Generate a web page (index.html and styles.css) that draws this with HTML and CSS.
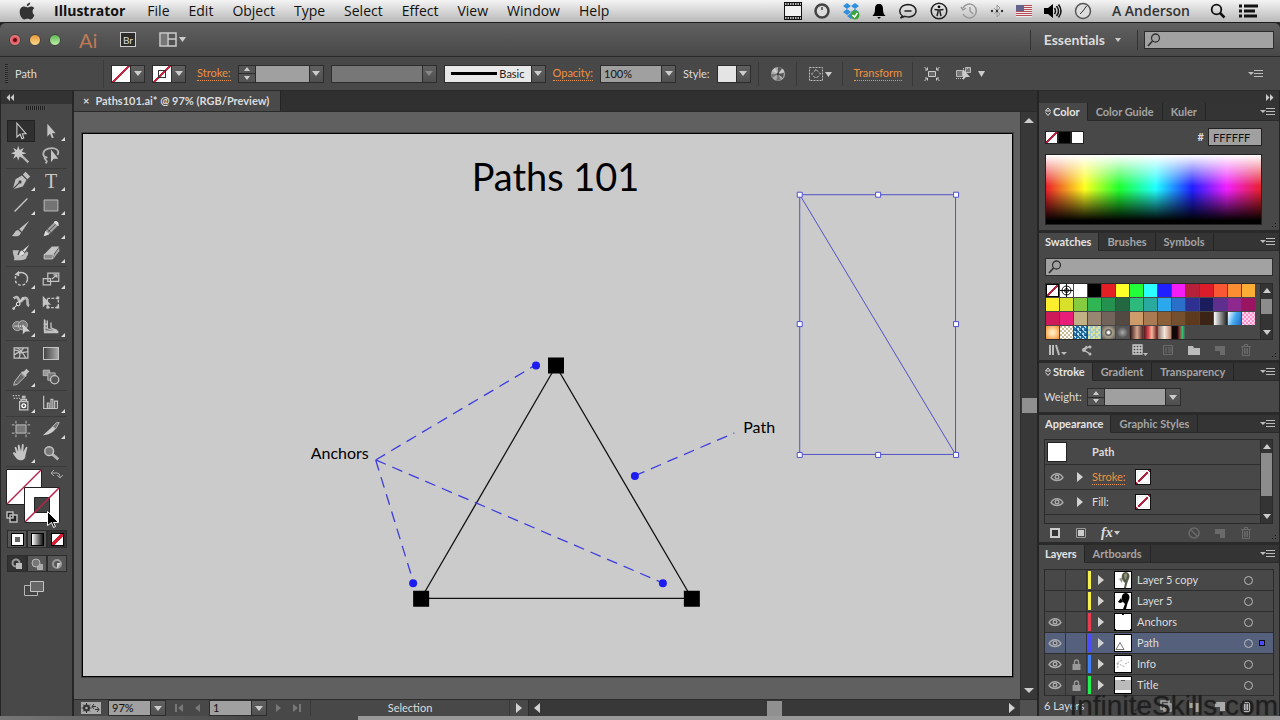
FILE: index.html
```html
<!DOCTYPE html>
<html lang="en">
<head>
    <meta charset="UTF-8">
    <meta name="viewport" content="width=device-width, initial-scale=1.0">
    <title>Illustrator - Paths101.ai</title>
    <link rel="stylesheet" href="styles.css">
</head>
<body>
    <!-- System menu bar -->
    <header class="menubar">
        <svg class="apple" width="18" height="18" viewBox="0 0 18 18"><path d="M12.2 0.6c0.2 1.8-1.6 3.7-3.4 3.6C8.600 2.500 10.300 0.800 12.200 0.600zM14.600 9.400c0-1.700 0.900-2.600 1.700-3.100-1-1.400-2.400-1.700-3.300-1.700-1.500 0-2.500 0.800-3.300 0.800S7.500 4.600 6.200 4.600C4 4.600 1.700 6.300 1.700 9.900c0 3.600 2.500 7.500 4.600 7.500 1.100 0 1.800-0.700 3.200-0.700 1.300 0 1.900 0.700 3.100 0.700 1.700 0 3.200-2.500 3.800-4.400-1.200-0.500-1.800-1.900-1.800-3.600z"/></svg>
        <nav class="menus">
            <a href="#" class="app-name">Illustrator</a>
            <a href="#">File</a>
            <a href="#">Edit</a>
            <a href="#">Object</a>
            <a href="#">Type</a>
            <a href="#">Select</a>
            <a href="#">Effect</a>
            <a href="#">View</a>
            <a href="#">Window</a>
            <a href="#">Help</a>
        </nav>
        <div class="menu-extras">
            <svg width="18" height="18" viewBox="0 0 18 18"><path fill="#111" d="M0 0h18v18H0z"/><path fill="#f2f2f2" d="M1 4h16v10H1z"/><path stroke="#eee" stroke-width="1.500" stroke-dasharray="1.500 1" d="M1 2h16M1 16h16"/></svg>
            <svg width="16" height="16" viewBox="0 0 16 16"><circle cx="8" cy="8" r="6.500" fill="#ddd" stroke="#444" stroke-width="2.500"/><path stroke="#444" stroke-width="1.500" d="M8 4v3"/></svg>
            <svg width="18" height="18" viewBox="0 0 18 18"><path fill="#2f8fe0" d="M5 1l4 3-4 3-4-3zM13 1l4 3-4 3-4-3zM5 7l4 3-4 3-4-3zM13 7l4 3-4 3-4-3zM5 14l4-3 4 3-4 3z"/><circle cx="13" cy="13" r="4.500" fill="#3ea338"/><path fill="none" stroke="#fff" stroke-width="1.500" d="M10.500 13l2 2 3-4"/></svg>
            <svg width="14" height="16" viewBox="0 0 14 16"><path d="M7 1c3 0 4 2 4 5 0 4 1 5 2.500 7H0.500C2 11 3 10 3 6c0-3 1-5 4-5zM5.500 14h3c0 2-3 2-3 0z"/></svg>
            <svg width="20" height="18" viewBox="0 0 20 18"><path fill="none" stroke="#222" stroke-width="1.500" d="M4.500 14C0 11 1 3 10 2.500c10 0 11 12 1 12.500-2 0-3-0.300-4-0.600L2.500 16zM6.500 9h7"/></svg>
            <svg width="18" height="18" viewBox="0 0 18 18"><circle cx="9" cy="9" r="7.800" fill="none" stroke="#222" stroke-width="1.500"/><circle cx="9" cy="4.800" r="1.400"/><path fill="none" stroke="#222" stroke-width="1.500" d="M4.500 7.500L9 8l4.500-0.500M7 14l1-4V8h2v2l1 4"/></svg>
            <svg width="18" height="18" viewBox="0 0 18 18"><path fill="none" stroke="#999" stroke-width="1.500" d="M3 6a7 7 0 1 1 0 6M1 5l2 3 3-2M10 5v4l3 3"/></svg>
            <svg width="14" height="16" viewBox="0 0 14 16"><path fill="none" stroke="#999" d="M4 5l6 6-3 3V2l3 3-6 6"/><circle cx="2" cy="8" r="1.200" fill="#333"/><circle cx="7" cy="8" r="1.200" fill="#333"/><circle cx="12" cy="8" r="1.200" fill="#333"/></svg>
            <svg width="16" height="12" viewBox="0 0 16 12"><path fill="#eee" d="M0 0h16v12H0z"/><path stroke="#b64a55" d="M0 0.500h16M0 2.500h16M0 4.500h16M0 6.500h16M0 8.500h16M0 10.500h16"/><path fill="#63638c" d="M0 0h8v6H0z"/></svg>
            <svg width="18" height="16" viewBox="0 0 18 16"><path d="M0 5h4l5-4v14l-5-4H0z"/><path fill="none" stroke="#111" stroke-width="1.500" d="M10.500 5q2 3 0 6M12.500 3q4 5 0 10M14.500 1.500q5 6.500 0 13"/></svg>
            <svg width="18" height="18" viewBox="0 0 18 18"><circle cx="9" cy="9" r="7.500" fill="#ddd" stroke="#555" stroke-width="1.500"/><path fill="none" stroke="#333" d="M12.500 4L9 9l-3 3"/></svg>
            <span class="user-name">A Anderson</span>
            <svg width="16" height="16" viewBox="0 0 16 16"><circle cx="6.500" cy="6.500" r="4.800" fill="none" stroke="#111" stroke-width="1.800"/><path stroke="#111" stroke-width="2.500" d="M10 10l4.500 4.500"/></svg>
            <svg width="22" height="14" viewBox="0 0 22 14"><path stroke="#111" stroke-width="3" d="M1 2h3M6 2h14M1 7h3M6 7h11M1 12h3M6 12h13"/></svg>
        </div>
    </header>

    <!-- Application bar -->
    <div class="appbar">
        <div class="lights">
            <button class="light red" aria-label="Close"></button>
            <button class="light amber" aria-label="Minimize"></button>
            <button class="light green" aria-label="Zoom"></button>
        </div>
        <span class="logo">Ai</span>
        <button class="bridge">Br</button>
        <button class="arrange" aria-label="Arrange documents">
            <svg width="27" height="16" viewBox="0 0 27 16"><path fill="none" stroke="#ccc" stroke-width="1.500" d="M1 1h16v13H1zM9 1v13M9 7h8"/><path fill="#777" d="M2 2h6v11H2z"/><path fill="#ccc" d="M20 5h7l-3.500 5z"/></svg>
        </button>
        <div class="appbar-right">
            <button class="workspace">Essentials <span class="caret small"></span></button>
            <label class="search top-search">
                <svg width="14" height="14" viewBox="0 0 14 14"><use href="#i-lens"/></svg>
                <input type="text" aria-label="Search help">
            </label>
        </div>
    </div>

    <!-- Control bar -->
    <div class="controlbar">
        <span class="grip"></span>
        <span class="object-type">Path</span>
        <span class="combo"><button class="chip none" aria-label="Fill"></button><button class="drop" aria-label="Fill options"><i class="caret"></i></button></span>
        <span class="combo"><button class="chip none ring" aria-label="Stroke"></button><button class="drop" aria-label="Stroke options"><i class="caret"></i></button></span>
        <a href="#" class="hot push">Stroke:</a>
        <span class="combo">
            <span class="stepper"><button aria-label="Increase"><i class="caret up"></i></button><button aria-label="Decrease"><i class="caret"></i></button></span>
            <input class="weight" type="text" aria-label="Stroke weight">
            <button class="drop" aria-label="Weights"><i class="caret"></i></button>
        </span>
        <span class="combo disabled"><button class="profile" aria-label="Width profile" disabled></button><button class="drop" aria-label="Profiles" disabled><i class="caret"></i></button></span>
        <span class="combo"><button class="brush"><i class="line"></i>Basic</button><button class="drop" aria-label="Brushes"><i class="caret"></i></button></span>
        <a href="#" class="hot">Opacity:</a>
        <span class="combo"><input class="opacity" type="text" value="100%" aria-label="Opacity"><button class="drop" aria-label="Opacities"><i class="caret"></i></button></span>
        <span class="label">Style:</span>
        <span class="combo"><button class="chip plain" aria-label="Style"></button><button class="drop" aria-label="Styles"><i class="caret"></i></button></span>
        <span class="tool-group">
            <svg width="16" height="16" viewBox="0 0 16 16"><circle cx="8" cy="8" r="7" fill="#aaa"/><path fill="#555" d="M8 8V1l4 1zM8 8l6-1-1 5z"/><path fill="#777" d="M8 8l3 6-5 1zM8 8l-6 4-1-4z"/><path fill="#ccc" d="M8 8L2 5l3-3zM8 8l5-5 1 3z"/><circle cx="8" cy="8" r="1.500" fill="#444"/></svg>
        </span>
        <span class="tool-group">
            <svg width="24" height="16" viewBox="0 0 24 16"><path fill="none" stroke="#bbb" stroke-dasharray="2 1" d="M1.500 1.500h13v13h-13z"/><path fill="none" stroke="#ccc" stroke-dasharray="3 1.500" d="M8 3.500l4.500 4.500L8 12.500 3.500 8z"/><path fill="#ccc" d="M17 6h7l-3.500 5z"/></svg>
        </span>
        <span class="tool-group"><a href="#" class="hot">Transform</a></span>
        <span class="tool-group wide">
            <svg width="16" height="16" viewBox="0 0 16 16"><path fill="#666" stroke="#ccc" d="M4.500 5.500h7v5h-7z"/><path fill="none" stroke="#ccc" d="M0.500 1l3 3M3.500 1.500V4H1M15.500 1l-3 3M12.500 1.500V4H15M0.500 15l3-3M3.500 14.500V12H1M15.500 15l-3-3M12.500 14.500V12H15"/></svg>
            <svg width="30" height="16" viewBox="0 0 30 16"><path fill="#777" stroke="#bbb" d="M1.500 4.500h6v6h-6zM10.500 1.500h5v5h-5z"/><path stroke="#bbb" stroke-dasharray="1 1" d="M1 12.500h8M8 2.500h5"/><path fill="#ccc" d="M8 3v11l3-3h4zM23 5h7l-3.500 6z"/></svg>
        </span>
        <button class="flyout" aria-label="Control menu"><svg width="16" height="10"><use href="#i-menu"/></svg></button>
    </div>

    <main class="workspace-area">
        <!-- Tools panel -->
        <aside class="tools">
            <div class="dock-head"><svg width="8" height="7" viewBox="0 0 8 7"><path fill="#ccc" d="M4 0v7L0.500 3.500zM8 0v7L4.500 3.500z"/></svg></div>
            <div class="tools-grip"></div>
            <div class="tool-set">
                <button class="tool active" aria-label="Selection"><svg viewBox="0 0 24 24"><path fill="#333" stroke="#ccc" stroke-width="1.200" d="M7.500 3.500v15l3.500-3 2 5 2-1-1.500-4.500h4z"/></svg></button>
                <button class="tool more" aria-label="Direct selection"><svg viewBox="0 0 24 24"><path fill="#c4c4c4" d="M8 4v14l3-3 2 5 2-1-2-4.500h4z"/></svg></button>
                <button class="tool" aria-label="Magic wand"><svg viewBox="0 0 24 24"><path stroke="#b5b5b5" stroke-width="2.500" d="M12 12l8 8"/><path fill="#c8c8c8" d="M9 2l1.500 4.500L15 4l-2 4.500L18 10l-5 1.500L15 16l-4.500-2.500L9 18l-1.500-4.500L3.500 16l2-4.500L1 10l4.500-1.500L3.500 4l4 2.500z"/></svg></button>
                <button class="tool" aria-label="Lasso"><svg viewBox="0 0 24 24"><path fill="none" stroke="#b5b5b5" stroke-width="2" d="M8 15C2 14 2 7 9 5c8-2 13 2 10 7M8 15c-3-2-4 0-2 2s2 2 0 4"/><path fill="#c4c4c4" d="M12 6v14l3-4h5z"/></svg></button>
            </div>
            <div class="tool-set">
                <button class="tool more" aria-label="Pen"><svg viewBox="0 0 24 24"><path fill="#c0c0c0" d="M3 21l3-11 7-4 5 5-4 7zM14 5l3-3 5 5-3 3z"/><path stroke="#444" stroke-width="1.200" d="M3 21l7-7"/><circle cx="11" cy="13" r="1.700" fill="#444"/></svg></button>
                <button class="tool more type-tool" aria-label="Type">T</button>
                <button class="tool more" aria-label="Line segment"><svg viewBox="0 0 24 24"><path stroke="#c4c4c4" stroke-width="1.500" d="M5 19L19 5"/></svg></button>
                <button class="tool more" aria-label="Rectangle"><svg viewBox="0 0 24 24"><path fill="#747474" stroke="#c4c4c4" d="M4.500 6.500h15v12h-15z"/></svg></button>
                <button class="tool" aria-label="Paintbrush"><svg viewBox="0 0 24 24"><path fill="#c0c0c0" d="M21 3L10 12l3 3zM9 13l3 3c-1 4-6 5-10 3 3-1 3-6 7-6z"/></svg></button>
                <button class="tool more" aria-label="Pencil"><svg viewBox="0 0 24 24"><path fill="#a0a0a0" d="M4 20l3-7L16 4l4 4-9 9z"/><path fill="#ddd" d="M4 20l2-6 4 4zM15 5c2-4 7 0 5 4z"/><path stroke="#555" d="M8 12l5 5M9 15l8-8"/></svg></button>
                <button class="tool" aria-label="Blob brush"><svg viewBox="0 0 24 24"><path fill="#bcbcbc" d="M3 9h7l-2 5 6 1 4-5c3 1 2 5 0 6 1 3-4 4-8 4H4c2-3-1-5-1-11z"/><path fill="#ddd" d="M21 3l-7 6 2 2zM13 9l3 3c-1 3-4 3-6 3 0-2 0-4 3-6z"/></svg></button>
                <button class="tool more" aria-label="Eraser"><svg viewBox="0 0 24 24"><path fill="#c4c4c4" d="M5 13l8-8h8l-6 8z"/><path fill="#8c8c8c" stroke="#ccc" d="M4.500 13.500H15l-1.500 5h-9z"/><path fill="#aaa" d="M16 13l5-7v4l-7 9z"/></svg></button>
            </div>
            <div class="tool-set">
                <button class="tool more" aria-label="Rotate"><svg viewBox="0 0 24 24"><path fill="none" stroke="#c4c4c4" stroke-width="1.600" d="M8 6c6-3 12 1 11 7"/><path fill="none" stroke="#c4c4c4" stroke-width="1.600" stroke-dasharray="3 2" d="M19 13c-2 8-12 7-13 1V8"/><path fill="#c4c4c4" d="M5 7l5-4v6z"/></svg></button>
                <button class="tool more" aria-label="Scale"><svg viewBox="0 0 24 24"><path fill="none" stroke="#c4c4c4" stroke-width="1.300" d="M8.500 5.500h12v9h-12zM3.500 11.500h8v7h-8zM13 12l5-4M14.500 7.500h4v3"/></svg></button>
                <button class="tool more" aria-label="Width"><svg viewBox="0 0 24 24"><path fill="none" stroke="#b5b5b5" stroke-width="3" d="M4 7c6-5 5 5 8 3s3-5 6-3-1 7 3 8"/><path stroke="#ddd" stroke-width="1.200" d="M4 18L14 7"/><circle cx="9" cy="13" r="2" fill="#444" stroke="#fff"/><circle cx="4" cy="18" r="1.500" fill="#ccc"/><circle cx="14" cy="7" r="1.500" fill="#ccc"/></svg></button>
                <button class="tool" aria-label="Free transform"><svg viewBox="0 0 24 24"><path fill="none" stroke="#c4c4c4" stroke-width="1.500" stroke-dasharray="3 1.500" d="M8 7h12v10H8z"/><path fill="#c4c4c4" d="M3 4v13l3-3h6zM18 5h3v3h-3zM18 15h3v3h-3zM7 15h3v3H7z"/></svg></button>
                <button class="tool more" aria-label="Shape builder"><svg viewBox="0 0 24 24"><circle cx="8" cy="11" r="5" fill="#777" stroke="#b5b5b5"/><circle cx="14" cy="10" r="5" fill="#777" stroke="#b5b5b5"/><path stroke="#fff" stroke-width="1.500" stroke-dasharray="1 1" d="M5 11h9"/><path fill="#ccc" d="M14 9v11l3-3h5z"/></svg></button>
                <button class="tool more" aria-label="Perspective grid"><svg viewBox="0 0 24 24"><path fill="#888" d="M4 3l3 2v13H4z"/><path fill="none" stroke="#c4c4c4" stroke-width="1.400" d="M5 4v14h15L5 16M8 5v9l12 3M12 7v6l7 3M4 9h4M4 13h4"/></svg></button>
            </div>
            <div class="tool-set">
                <button class="tool" aria-label="Mesh"><svg viewBox="0 0 24 24"><path fill="none" stroke="#c4c4c4" stroke-width="1.400" d="M4.500 6.500h15v11h-15zM5 9c5-1 7 4 5 8M7 6c6 3 7 6 10 11M15 6c-1 4-5 4-10 8M10 12c4 0 7-2 10-1"/></svg></button>
                <button class="tool" aria-label="Gradient"><i class="gradient-tile"></i></button>
                <button class="tool more" aria-label="Eyedropper"><svg viewBox="0 0 24 24"><path fill="#c4c4c4" d="M13 6l2 0 3-3 3 3-3 3v2l-1 1-5-5z"/><path fill="#666" stroke="#c4c4c4" d="M12 8l4 4-8 8-4 1 1-4z"/></svg></button>
                <button class="tool" aria-label="Blend"><svg viewBox="0 0 24 24"><path fill="#999" stroke="#bbb" d="M3.500 4.500h7v6h-7z"/><path fill="#777" stroke="#bbb" d="M8.500 7.500h8v8h-8z"/><circle cx="16" cy="15" r="4.500" fill="#555" stroke="#c4c4c4" stroke-width="1.400"/></svg></button>
            </div>
            <div class="tool-set">
                <button class="tool more" aria-label="Symbol sprayer"><svg viewBox="0 0 24 24"><path stroke="#c4c4c4" stroke-width="1.500" stroke-dasharray="1.500 1.500" d="M3 4h9M4 7h7"/><path fill="none" stroke="#c4c4c4" stroke-width="1.400" d="M10.500 10.500h9v9h-9zM12 8h6v2h-6z"/><path fill="#bbb" d="M13 4h4v3h-4z"/><circle cx="15" cy="15" r="2" fill="none" stroke="#fff" stroke-width="1.500"/></svg></button>
                <button class="tool more" aria-label="Column graph"><svg viewBox="0 0 24 24"><path fill="none" stroke="#c4c4c4" stroke-width="1.300" d="M4 4v14h15M8 18v-6h2v6M12 18V8h2v10M16 18V10h3v8"/></svg></button>
            </div>
            <div class="tool-set">
                <button class="tool" aria-label="Artboard"><svg viewBox="0 0 24 24"><path fill="#777" stroke="#c4c4c4" d="M6.500 7.500h11v9h-11z"/><path stroke="#c4c4c4" d="M6.500 3v3M17.500 3v3M6.500 18v3M17.500 18v3M2 7.500h3M19 7.500h3M2 16.500h3M19 16.500h3"/></svg></button>
                <button class="tool more" aria-label="Slice"><svg viewBox="0 0 24 24"><path fill="#ccc" d="M3 19L14 9l3 3c-4 5-8 6-14 7z"/><path fill="#777" stroke="#bbb" d="M14 9l4-4h3l-4 7z"/></svg></button>
                <button class="tool more" aria-label="Hand"><svg viewBox="0 0 24 24"><path fill="#c4c4c4" d="M7 13L5 6c0-1 1.500-1 2 0l2 5-0.500-7c0-1.500 2-1.500 2 0L12 10l1-7c0-1 2-1 2 0l-0.500 8L17 6c0.500-1 2-1 2 0l-2 8c0 4-2 6-5 6-4 0-6-3-9-8 1-1.500 3-0.500 4 1z"/></svg></button>
                <button class="tool" aria-label="Zoom"><svg viewBox="0 0 24 24"><path stroke="#b5b5b5" stroke-width="3" d="M13 13l7 6"/><circle cx="10" cy="10" r="4.800" fill="#777" stroke="#c4c4c4" stroke-width="1.600"/></svg></button>
            </div>
            <div class="paint">
                <svg width="60" height="56" viewBox="0 0 60 56">
                    <path fill="#fff" stroke="#222" d="M0.500 0.500h35v35h-35z"/>
                    <path stroke="#b3244b" stroke-width="1.500" d="M1 35L35 1"/>
                    <path fill="#fff" stroke="#222" d="M18.500 18.500h35v35h-35z"/>
                    <path fill="#444" stroke="#222" d="M28.500 28.500h15v15h-15z"/>
                    <path stroke="#b3244b" stroke-width="1.500" d="M19 53L53 19"/>
                    <path fill="none" stroke="#aaa" d="M46 4h5q3 0 3 4M48 1l-3 3 3 3M51 6l3 3 3-3"/>
                    <path fill="#222" stroke="#bbb" stroke-width="1.500" d="M4 46h7v7H4zM1 43h6v6H1z"/>
                    <path stroke="#fff" d="M41.500 42.500v14l4-3 2 5 2-1-2-4h5z"/>
                </svg>
            </div>
            <div class="mode-row">
                <button aria-label="Color"><i class="m-color"></i></button>
                <button aria-label="Gradient"><i class="m-gradient"></i></button>
                <button class="on" aria-label="None"><i class="m-none"></i></button>
            </div>
            <div class="mode-row draw">
                <button class="on" aria-label="Draw normal"><svg width="12" height="12" viewBox="0 0 12 12"><circle cx="5" cy="5" r="3.500" fill="none" stroke="#999" stroke-width="2"/><path fill="#bbb" d="M5 5h6v6H5z"/></svg></button>
                <button aria-label="Draw behind"><svg width="12" height="12" viewBox="0 0 12 12"><path fill="#aaa" d="M6 6h6v6H6z"/><circle cx="5" cy="5" r="4" fill="#777" stroke="#bbb"/></svg></button>
                <button aria-label="Draw inside"><svg width="12" height="12" viewBox="0 0 12 12"><circle cx="6" cy="6" r="4" fill="none" stroke="#999" stroke-width="2"/><path fill="#ccc" d="M6 5h4l-3 5H6z"/></svg></button>
            </div>
            <button class="screen-mode" aria-label="Screen mode"><svg width="22" height="18" viewBox="0 0 22 18"><path fill="#444" stroke="#b5b5b5" d="M1.500 5.500h13v10h-13z"/><path fill="#666" stroke="#c4c4c4" d="M7.500 1.500h13v10h-13z"/></svg></button>
        </aside>

        <!-- Document window -->
        <section class="document">
            <div class="doc-tabs">
                <div class="doc-tab"><button aria-label="Close tab">×</button>Paths101.ai* @ 97% (RGB/Preview)</div>
            </div>
            <div class="doc-view">
                <div class="stage">
                    <div class="artboard">
                        <svg width="100%" height="100%" viewBox="83 134 930 542">
                            <text class="art-title" x="556" y="191" text-anchor="middle">Paths 101</text>
                            <path class="triangle" d="M556.500 366L421.500 598.500H692.500z"/>
                            <path d="M548.500 357.500h16v16h-16zM413.500 591h16v16h-16zM684.500 591h16v16h-16z"/>
                            <path class="pointer" d="M376 460L536 365M376 460l38 123M376 460L663 583M635 476l100-43"/>
                            <g class="dots">
                                <circle cx="536.500" cy="365.500" r="4"/>
                                <circle cx="413.500" cy="583.500" r="4"/>
                                <circle cx="663.500" cy="583.500" r="4"/>
                                <circle cx="635.500" cy="476" r="4"/>
                            </g>
                            <text class="art-label" x="311" y="459">Anchors</text>
                            <text class="art-label" x="744" y="433">Path</text>
                            <path class="bounds" d="M800.500 194.500h156v260h-156zL956.500 454.500"/>
                            <path class="handles" d="M798 192h5v5h-5zM876.500 192h5v5h-5zM954.500 192h5v5h-5zM798 321.500h5v5h-5zM954.500 321.500h5v5h-5zM798 452.500h5v5h-5zM876.500 452.500h5v5h-5zM954.500 452.500h5v5h-5z"/>
                        </svg>
                    </div>
                </div>
                <div class="scroll vertical">
                    <button aria-label="Scroll up"><i class="caret up big"></i></button>
                    <span class="thumb"></span>
                    <button aria-label="Scroll down"><i class="caret big"></i></button>
                </div>
            </div>
            <div class="statusbar">
                <button class="sync" aria-label="Sync settings"><svg width="20" height="12" viewBox="0 0 20 12"><path fill="#aaa" d="M0 0h20v12H0z"/><circle cx="5.500" cy="6" r="2.500" fill="#aaa" stroke="#333" stroke-width="2"/><path stroke="#333" d="M5.500 1v10M0.500 6h10M2 2.500l7 7M9 2.500l-7 7"/><circle cx="5.500" cy="6" r="1.200" fill="#aaa"/><path fill="none" stroke="#333" d="M11 4.500h4M13 2l-2 2.500 2 2.500M14 7.500h4M16 5l2 2.500-2 2.500"/></svg></button>
                <span class="combo"><input class="short" type="text" value="97%" aria-label="Zoom level"><button class="drop" aria-label="Zoom levels"><i class="caret"></i></button></span>
                <span class="pager"><button aria-label="First" disabled><svg width="8" height="8"><path fill="#777" d="M0 0h2v8H0zM8 0v8L3 4z"/></svg></button><button aria-label="Previous" disabled><svg width="5" height="8"><path fill="#777" d="M5 0v8L0 4z"/></svg></button></span>
                <span class="combo"><input class="short" type="text" value="1" aria-label="Artboard number"><button class="drop" aria-label="Artboards"><i class="caret"></i></button></span>
                <span class="pager"><button aria-label="Next" disabled><svg width="5" height="8"><path fill="#777" d="M0 0v8l5-4z"/></svg></button><button aria-label="Last" disabled><svg width="8" height="8"><path fill="#777" d="M6 0h2v8H6zM0 0v8l5-4z"/></svg></button></span>
                <span class="current-tool">Selection</span>
                <button class="status-more" aria-label="Status options"><i class="caret right"></i></button>
                <div class="scroll horizontal">
                    <button aria-label="Scroll left"><i class="caret left"></i></button>
                    <span class="thumb"></span>
                    <button aria-label="Scroll right"><i class="caret right"></i></button>
                </div>
                <span class="corner"></span>
            </div>
        </section>

        <!-- Panels -->
        <aside class="dock">
            <div class="dock-head end"><svg width="8" height="7" viewBox="0 0 8 7"><path fill="#ccc" d="M0 0v7l3.500-3.500zM4 0v7l3.500-3.500z"/></svg></div>

            <section class="panel">
                <div class="tabs"><button class="on"><svg width="6" height="9"><use href="#i-updown"/></svg>Color</button><button>Color Guide</button><button>Kuler</button><button class="flyout" aria-label="Panel menu"><svg width="16" height="10"><use href="#i-menu"/></svg></button></div>
                <div class="color-body">
                    <div class="color-row">
                        <span class="mini none"></span><span class="mini black"></span><span class="mini white"></span>
                        <label for="hex">#</label><input id="hex" type="text" value="FFFFFF">
                    </div>
                    <div class="spectrum"></div>
                    <i class="resize"></i>
                </div>
            </section>

            <section class="panel">
                <div class="tabs"><button class="on">Swatches</button><button>Brushes</button><button>Symbols</button><button class="flyout" aria-label="Panel menu"><svg width="16" height="10"><use href="#i-menu"/></svg></button></div>
                <div class="swatch-body">
                    <label class="search"><svg width="14" height="14" viewBox="0 0 14 14"><use href="#i-lens"/></svg><input type="text" aria-label="Find swatch"></label>
                    <div class="list-box">
                        <div class="swatches" id="swatches"></div>
                        <div class="mini-scroll"><i class="caret up"></i><span class="bar low"></span><i class="caret"></i></div>
                    </div>
                </div>
                <div class="panel-foot">
                    <svg width="18" height="12" viewBox="0 0 18 12"><path stroke="#bbb" stroke-width="2" d="M1 1v10M4 1v10M7 1l3 10"/><path fill="#bbb" d="M12 8h6l-3 3z"/></svg>
                    <svg width="12" height="12" viewBox="0 0 12 12"><path fill="none" stroke="#bbb" stroke-width="1.500" d="M9 2L3 6l6 4M6 2L2 6"/><circle cx="3" cy="6" r="2" fill="#bbb"/><circle cx="9" cy="3" r="1.500" fill="#bbb"/><circle cx="9" cy="10" r="1.500" fill="#bbb"/></svg>
                    <span class="fill"></span>
                    <svg width="16" height="12" viewBox="0 0 16 12"><path fill="none" stroke="#ccc" stroke-width="1.300" d="M1 1h9v9H1zM4 1v9M7 1v9M1 4h9M1 7h9"/><path fill="#bbb" d="M11 9h5l-2.500 3z"/></svg>
                    <svg width="12" height="12" viewBox="0 0 12 12"><path fill="none" stroke="#6a6a6a" d="M1.500 1.500h9v9h-9zM3 4h2M6 4h4M3 6h2M6 6h4M3 8h2M6 8h4"/></svg>
                    <svg width="12" height="12"><path fill="#bbb" d="M0 2h5l1 2h6v7H0z"/></svg>
                    <svg width="12" height="12"><use href="#i-new" fill="#6a6a6a"/></svg>
                    <svg width="12" height="12"><use href="#i-trash" stroke="#6a6a6a"/></svg>
                    <i class="resize"></i>
                </div>
            </section>

            <section class="panel">
                <div class="tabs"><button class="on"><svg width="6" height="9"><use href="#i-updown"/></svg>Stroke</button><button>Gradient</button><button>Transparency</button><button class="flyout" aria-label="Panel menu"><svg width="16" height="10"><use href="#i-menu"/></svg></button></div>
                <div class="stroke-body">
                    <label for="weight">Weight:</label>
                    <span class="combo">
                        <span class="stepper"><button aria-label="Increase"><i class="caret up"></i></button><button aria-label="Decrease"><i class="caret"></i></button></span>
                        <input class="weight-panel" id="weight" type="text">
                        <button class="drop" aria-label="Weights"><i class="caret"></i></button>
                    </span>
                </div>
            </section>

            <section class="panel">
                <div class="tabs"><button class="on">Appearance</button><button>Graphic Styles</button><button class="flyout" aria-label="Panel menu"><svg width="16" height="10"><use href="#i-menu"/></svg></button></div>
                <div class="appearance-body">
                    <div class="list-box">
                        <div class="looks">
                            <div class="look title"><span class="look-thumb"></span><b>Path</b></div>
                            <div class="look"><svg class="eye" width="14" height="10"><use href="#i-eye"/></svg><i class="caret right"></i><a href="#" class="hot">Stroke:</a><span class="look-chip"></span></div>
                            <div class="look"><svg class="eye" width="14" height="10"><use href="#i-eye"/></svg><i class="caret right"></i><span>Fill:</span><span class="look-chip"></span></div>
                            <div class="look"><span class="eye"></span></div>
                        </div>
                        <div class="mini-scroll"><i class="caret up"></i><span class="bar tall"></span><i class="caret"></i></div>
                    </div>
                </div>
                <div class="panel-foot look-foot">
                    <svg width="12" height="12"><path fill="#333" stroke="#ccc" stroke-width="2" d="M2 2h8v8H2z"/></svg>
                    <svg width="12" height="12"><path fill="none" stroke="#999" d="M1.500 1.500h9v9h-9z"/><path fill="#ccc" d="M3 3h6v6H3z"/></svg>
                    <button class="fx">fx<i class="caret small"></i></button>
                    <span class="fill"></span>
                    <svg width="12" height="12"><path fill="none" stroke="#6a6a6a" stroke-width="1.500" d="M6 1a5 5 0 1 0 .1 0zM2.500 2.500l7 7"/></svg>
                    <svg width="12" height="12"><use href="#i-new" fill="#6a6a6a"/></svg>
                    <svg width="12" height="12"><use href="#i-trash" stroke="#6a6a6a"/></svg>
                    <i class="resize"></i>
                </div>
            </section>

            <section class="panel last">
                <div class="tabs"><button class="on">Layers</button><button>Artboards</button><button class="flyout" aria-label="Panel menu"><svg width="16" height="10"><use href="#i-menu"/></svg></button></div>
                <ul class="layers">
                    <li><span class="cell"></span><span class="cell"></span><span class="bar-color yellow"></span><i class="caret right"></i>
                        <svg class="thumbnail" viewBox="0 0 16 16"><path fill="#9a9a8c" d="M4 7l4-2-1 6z"/><path fill="#565c49" d="M7 3c1-4 7-4 7.500 1 0 3-2 5-2.500 8l-1 4H9l1-5C8 9 6 6 7 3z"/><path fill="#8c9478" d="M9 3c1-2 3-2 3 0s-1 4-2 5z"/></svg>
                        <span class="name">Layer 5 copy</span><span class="target"></span></li>
                    <li><span class="cell"></span><span class="cell"></span><span class="bar-color yellow"></span><i class="caret right"></i>
                        <svg class="thumbnail" viewBox="0 0 16 16"><path d="M3 9l3-4 2 4-3 1zM7 3c1-4 7-4 7.500 1 0 3-2 5-2.500 8l-1 4H8l2-5C8 9 6 6 7 3z"/></svg>
                        <span class="name">Layer 5</span><span class="target"></span></li>
                    <li><span class="cell"><svg width="14" height="10"><use href="#i-eye"/></svg></span><span class="cell"></span><span class="bar-color red"></span><i class="caret right"></i>
                        <svg class="thumbnail" viewBox="0 0 16 16"><path d="M7 0h2v1H7zM0 15h1v1H0zM15 15h1v1h-1z"/></svg>
                        <span class="name">Anchors</span><span class="target"></span></li>
                    <li class="selected"><span class="cell"><svg width="14" height="10"><use href="#i-eye"/></svg></span><span class="cell"></span><span class="bar-color blue"></span><i class="caret right"></i>
                        <svg class="thumbnail" viewBox="0 0 16 16"><path fill="none" stroke="#777" d="M1 14.500l4-7 4 7z"/></svg>
                        <span class="name">Path</span><span class="target"></span><span class="picked"></span></li>
                    <li><span class="cell"><svg width="14" height="10"><use href="#i-eye"/></svg></span><span class="cell"><svg width="9" height="11"><use href="#i-lock"/></svg></span><span class="bar-color sky"></span><i class="caret right"></i>
                        <svg class="thumbnail" viewBox="0 0 16 16"><path fill="none" stroke="#aaa" stroke-dasharray="2 1" d="M7 4L2 7l8 4M2 7l1 5M10 8l4-2"/></svg>
                        <span class="name">Info</span><span class="target"></span></li>
                    <li><span class="cell"><svg width="14" height="10"><use href="#i-eye"/></svg></span><span class="cell"><svg width="9" height="11"><use href="#i-lock"/></svg></span><span class="bar-color green"></span><i class="caret right"></i>
                        <svg class="thumbnail" viewBox="0 0 16 16"><path fill="#bbb" d="M0 3h16v10H0z"/><path fill="#555" d="M6 3h4v1H6z"/></svg>
                        <span class="name">Title</span><span class="target"></span></li>
                </ul>
                <div class="panel-foot layer-foot">
                    <span class="count">6 Layers</span>
                    <span class="fill"></span>
                    <svg width="12" height="12" viewBox="0 0 14 14"><use href="#i-lens"/></svg>
                    <svg width="12" height="12"><path fill="none" stroke="#aaa" stroke-width="1.500" d="M1 1h8v8H1zM4 4h7v7H4z"/></svg>
                    <svg width="14" height="12"><path fill="#aaa" d="M3 3h11v9H9V8H3z"/><path fill="none" stroke="#aaa" d="M0 1h3v4h3"/></svg>
                    <svg width="12" height="12"><use href="#i-new" fill="#aaa"/></svg>
                    <svg width="12" height="12"><use href="#i-trash" stroke="#bbb"/></svg>
                </div>
            </section>
        </aside>
    </main>
    <div class="desktop-edge"></div>
    <div class="watermark">InfiniteSkills.com</div>

    <!-- Shared icons -->
    <svg class="defs" width="0" height="0">
        <symbol id="i-lens" viewBox="0 0 14 14"><circle cx="8.500" cy="5" r="4" fill="none" stroke="#333" stroke-width="1.300"/><path stroke="#333" stroke-width="1.800" d="M5.500 8L1 13"/></symbol>
        <symbol id="i-menu" viewBox="0 0 16 10"><path fill="#bbb" d="M0 3h6L3 6z"/><path stroke="#bbb" d="M6 1.500h9M6 4.500h9M6 7.500h9"/></symbol>
        <symbol id="i-updown" viewBox="0 0 6 9"><path fill="none" stroke="#ddd" d="M0.500 4L3 1l2.500 3zM0.500 5.500L3 8.500l2.500-3"/></symbol>
        <symbol id="i-eye" viewBox="0 0 14 10"><path fill="none" stroke="#aaa" stroke-width="1.300" d="M1 5.500C4 0.500 10 0.500 13 5.500 10 9.500 4 9.500 1 5.500z"/><circle cx="7" cy="5" r="2.500" fill="#aaa"/><circle cx="7" cy="5" r="1" fill="#333"/></symbol>
        <symbol id="i-lock" viewBox="0 0 9 11"><path fill="#999" d="M0.500 5h8v6h-8z"/><path fill="none" stroke="#999" stroke-width="1.400" d="M2.500 5V3q0-2 2-2t2 2v2"/></symbol>
        <symbol id="i-new" viewBox="0 0 12 12"><path d="M1 2h10v9H6V7H1z"/><path fill="#444" d="M2 8h3v3z"/></symbol>
        <symbol id="i-trash" viewBox="0 0 12 12"><path fill="none" d="M1 2.500h10M4.500 2V0.500h3V2M2.500 3v8.500h7V3M4.500 4v6M6 4v6M7.500 4v6"/></symbol>
    </svg>

    <script>
        const swatches = document.getElementById('swatches');

        const colors = [
            'none', 'registration', '#fff', '#000', '#e31e24', '#ffff29', '#22ff38', '#2bffff', '#1f1fff', '#f51df5', '#b5203a', '#dc1c2a', '#fa5735', '#fb8e34', '#fcad35',
            '#fcee2c', '#d9e02a', '#86cc40', '#2fb553', '#249150', '#236840', '#2db87c', '#2aaa9f', '#2ca9ee', '#2a70c8', '#2e3192', '#1b1c5e', '#5f2f90', '#8e278e', '#9b1462',
            '#ce1a58', '#e81e79', '#c3b186', '#988672', '#72645a', '#524a42', '#ce9b6a', '#aa7b52', '#8b6039', '#74502f', '#5d3a1d', '#3b2416',
            'linear-gradient(90deg, #fff, #222)', 'linear-gradient(110deg, #fff, #45aaf3 50%, #1f6dbb)', 'repeating-conic-gradient(#ff8fcb 0 25%, #fbd6ec 0 50%) 0 0 / 4px 4px',
            'radial-gradient(#ffe7b8 20%, #f79030)', 'repeating-conic-gradient(#fff 0 25%, #c9b891 0 50%) 0 0 / 4px 4px', 'repeating-conic-gradient(#2570a8 0 25%, #b9e0ee 0 40%, #164d7c 0 60%) 0 0 / 5px 5px',
            'repeating-conic-gradient(#9dcbd0 0 25%, #dce09a 0 50%) 0 0 / 5px 5px', 'radial-gradient(#fff 10%, #555 30%, #aaa089 45%, #555)', 'radial-gradient(#aaa, #555 60%)',
            'linear-gradient(90deg, #2c1512, #d9a993 55%, #4a2823)', 'linear-gradient(90deg, #5a1521, #d94f50 35%, #f4b89d 60%, #6e1f20)',
            'linear-gradient(90deg, #8f7468, #f4e7dc 50%, #b9826a)', 'linear-gradient(90deg, #120a0a 40%, #a43833 60%, #2bc773 80%, #555)'
        ];

        colors.forEach(function(color) {
            const swatch = document.createElement('button');
            swatch.className = 'swatch';
            swatch.setAttribute('aria-label', 'Swatch');
            if (color === 'none') {
                swatch.classList.add('none');
            } else if (color === 'registration') {
                swatch.classList.add('registration');
                swatch.innerHTML = '<svg width="13" height="13" viewBox="0 0 13 13"><path fill="none" stroke="#111" d="M0 6.500h13M6.500 0v13"/><circle cx="6.500" cy="6.500" r="4.500" fill="none" stroke="#111"/><circle cx="6.500" cy="6.500" r="2" fill="none" stroke="#111"/></svg>';
            } else {
                swatch.style.background = color;
            }
            swatches.appendChild(swatch);
        });
    </script>
</body>
</html>
```

FILE: styles.css
```css
* {
    box-sizing: border-box;
}
body {
    margin: 0;
    height: 100vh;
    display: flex;
    flex-direction: column;
    overflow: hidden;
    background-color: #262626;
    color: #dcdcdc;
    font-family: Lato, "Liberation Sans", sans-serif;
    font-size: 11px;
    line-height: 16px;
}
button,
input {
    font: inherit;
    color: inherit;
    margin: 0;
    padding: 0;
    border: 0;
    border-radius: 0;
    background: none;
    min-width: 0;
}
a {
    color: inherit;
    text-decoration: none;
}
svg {
    flex: none;
}
.defs {
    position: absolute;
}

/* menu bar */
.menubar {
    flex: none;
    height: 22px;
    display: flex;
    align-items: center;
    padding: 0 20px 0 18px;
    background: linear-gradient(#f4f4f4, #b9b9b9);
    color: #111;
    font-family: "Open Sans", "Noto Sans", sans-serif;
    font-size: 14px;
}
.apple {
    margin-right: 18px;
    fill: #333;
}
.menus {
    display: flex;
    gap: 19px;
}
.app-name {
    margin-right: 3px;
    font-weight: 700;
}
.menu-extras {
    display: flex;
    align-items: center;
    gap: 12px;
    margin-left: auto;
}
.user-name {
    margin: 0 8px;
    color: #333;
    font-weight: 600;
}

/* app bar */
.appbar {
    flex: none;
    height: 35px;
    display: flex;
    align-items: center;
    padding: 0 6px 0 9px;
    border-top: 1px solid #1c1c1c;
    border-bottom: 1px solid #2a2a2a;
    border-radius: 6px 6px 0 0;
    background: linear-gradient(#606060, #484848);
}
.lights {
    display: flex;
    gap: 8px;
    margin-right: 18px;
}
.light {
    width: 12px;
    height: 12px;
    border-radius: 50%;
    border: 1px solid #444;
}
.light.red {
    background: radial-gradient(#5c0a10 20%, #e2565e 35%, #f3a5a5);
}
.light.amber {
    background: linear-gradient(#e8993b, #ffd98c);
}
.light.green {
    background: linear-gradient(#60b956, #bdf0a6);
}
.logo {
    width: 41px;
    color: #c07a55;
    font-size: 20px;
    line-height: 24px;
}
.bridge {
    width: 16px;
    height: 15px;
    margin-right: 23px;
    border: 1px solid #ccc;
    background: #2c2c2c;
    font-size: 10px;
    line-height: 12px;
}
.arrange {
    height: 16px;
}
.appbar-right {
    display: flex;
    align-items: center;
    gap: 6px;
    margin-left: auto;
}
.workspace {
    display: flex;
    align-items: center;
    gap: 10px;
    height: 20px;
    padding: 0 16px 0 13px;
    border-left: 1px solid #333;
    border-right: 1px solid #333;
    font-size: 14px;
    font-weight: 700;
}
.search {
    display: flex;
    align-items: center;
    height: 18px;
    padding: 0 2px;
    border: 1px solid #2c2c2c;
    background: #a2a2a2;
}
.search input {
    flex: 1;
    color: #111;
}
.top-search {
    width: 130px;
}
.top-search input {
    width: 100px;
}

/* small arrows */
.caret {
    display: inline-block;
    flex: none;
    width: 0;
    height: 0;
    border: 4px solid transparent;
    border-top: 5px solid #ccc;
    border-bottom: 0;
}
.caret.up {
    border-top: 0;
    border-bottom: 5px solid #ccc;
}
.caret.right {
    border: 5px solid transparent;
    border-left: 6px solid #d2d2d2;
    border-right: 0;
}
.caret.left {
    border: 5px solid transparent;
    border-right: 6px solid #d2d2d2;
    border-left: 0;
}
.caret.small {
    border-width: 4px 3px 0;
}
.caret.big {
    border-left-width: 5px;
    border-right-width: 5px;
}

/* control bar */
.controlbar {
    flex: none;
    height: 34px;
    display: flex;
    align-items: center;
    gap: 7px;
    padding: 0 16px 0 5px;
    background: #484848;
    border-bottom: 1px solid #2a2a2a;
}
.grip {
    width: 3px;
    height: 19px;
    background: repeating-linear-gradient(#222 0 1px, #555 1px 2px);
}
.object-type {
    width: 89px;
    height: 28px;
    line-height: 28px;
    border-right: 1px solid #3c3c3c;
}
.hot {
    color: #ee9240;
    line-height: 14px;
    border-bottom: 1px dotted #ee9240;
}
.push {
    margin-left: 4px;
}
.combo {
    display: flex;
    height: 18px;
    border: 1px solid #2c2c2c;
}
.combo input {
    background: #a0a0a0;
    color: #111;
    padding: 0 3px;
}
.drop {
    width: 14px;
    display: flex;
    align-items: center;
    justify-content: center;
    border-left: 1px solid #2c2c2c;
    background: linear-gradient(#606060, #505050);
}
.chip {
    width: 18px;
    position: relative;
    background: #fff;
}
.chip.none {
    background: linear-gradient(135deg, #fff 46%, #c5243f 46% 54%, #fff 54%);
}
.chip.ring::after {
    content: "";
    position: absolute;
    inset: 4px 5px;
    border: 1px solid #333;
}
.chip.plain {
    background: #e4e4e4;
}
.stepper {
    width: 17px;
    display: flex;
    flex-direction: column;
    border-right: 1px solid #2c2c2c;
    background: #555;
}
.stepper button {
    flex: 1;
    display: flex;
    align-items: center;
    justify-content: center;
}
.stepper button + button {
    border-top: 1px solid #2c2c2c;
}
.stepper .caret {
    border-left-width: 3px;
    border-right-width: 3px;
}
.stepper .caret.up {
    border-bottom-width: 4px;
}
.stepper .caret:not(.up) {
    border-top-width: 4px;
}
.weight {
    width: 53px;
}
.profile {
    width: 90px;
    background: #777;
}
.disabled .caret {
    opacity: 0.4;
}
.brush {
    width: 86px;
    display: flex;
    align-items: center;
    justify-content: space-between;
    padding: 0 6px;
    background: #e8e8e8;
    color: #222;
}
.line {
    width: 46px;
    height: 3px;
    background: #000;
}
.opacity {
    width: 60px;
}
.tool-group {
    display: flex;
    align-items: center;
    height: 24px;
    padding: 0 3px 0 11px;
    border-left: 1px solid #383838;
}
.wide {
    gap: 15px;
}
.flyout {
    display: flex;
    margin-left: auto;
}

/* tools */
.workspace-area {
    flex: 1;
    min-height: 0;
    display: flex;
}
.tools {
    flex: none;
    width: 74px;
    border: 1px solid #262626;
    border-width: 0 2px 0 1px;
    background: #484848;
}
.dock-head {
    height: 13px;
    display: flex;
    align-items: center;
    padding: 0 5px;
    background: #333;
}
.dock-head.end {
    justify-content: flex-end;
}
.tools-grip {
    width: 20px;
    height: 4px;
    margin: 2px auto 9px 25px;
    background: repeating-linear-gradient(90deg, #1c1c1c 0 1px, #555 1px 2px);
}
.tool-set {
    display: grid;
    grid-template-columns: 30px 30px;
    grid-auto-rows: 24px;
    margin: 0 5px;
    border-bottom: 1px solid #3a3a3a;
    padding-bottom: 1px;
}
.tool {
    position: relative;
    display: flex;
    align-items: center;
    justify-content: center;
}
.tool svg {
    width: 22px;
    height: 22px;
}
.tool.active {
    margin: 1px;
    background: #303030;
    box-shadow: 0 0 0 1px #222 inset;
}
.tool.more::after {
    content: "";
    position: absolute;
    right: 1px;
    bottom: 2px;
    border: 2px solid transparent;
    border-right-color: #ddd;
    border-bottom-color: #ddd;
}
.type-tool {
    font-family: "Liberation Serif", serif;
    font-size: 20px;
    color: #c8c8c8;
}
.gradient-tile {
    width: 16px;
    height: 13px;
    border: 1px solid #c4c4c4;
    background: linear-gradient(90deg, #444, #aaa);
}
.paint {
    height: 59px;
    padding: 2px 0 0 5px;
}
.paint svg {
    overflow: visible;
}
.mode-row {
    display: grid;
    grid-template-columns: repeat(3, 20px);
    margin: 4px 0 0 6px;
    height: 18px;
}
.mode-row button {
    display: flex;
    align-items: center;
    justify-content: center;
    border: 1px solid #2c2c2c;
    background: #575757;
}
.mode-row .on {
    background: #333;
}
.mode-row.draw {
    height: 17px;
    margin-top: 7px;
}
.m-color,
.m-gradient,
.m-none {
    width: 13px;
    height: 13px;
    border: 1px solid #000;
    background: #fff;
}
.m-color {
    background: linear-gradient(#666, #666) center / 5px 5px no-repeat #fff;
}
.m-gradient {
    background: linear-gradient(90deg, #fff, #111);
}
.m-none {
    background: linear-gradient(135deg, #fff 40%, #d61e35 40% 60%, #fff 60%);
}
.screen-mode {
    display: block;
    margin: 8px 0 0 22px;
}

/* document */
.document {
    flex: 1;
    min-width: 0;
    display: flex;
    flex-direction: column;
    background: #606060;
}
.doc-tabs {
    flex: none;
    height: 21px;
    display: flex;
    background: #303030;
    border-bottom: 1px solid #2a2a2a;
}
.doc-tab {
    display: flex;
    align-items: center;
    gap: 6px;
    padding: 0 11px 0 9px;
    background: #4a4a4a;
    border-right: 1px solid #242424;
    font-weight: 700;
}
.doc-view {
    flex: 1;
    min-height: 0;
    display: flex;
}
.stage {
    flex: 1;
    min-width: 0;
    padding: 21px 7px 22px 8px;
}
.artboard {
    height: 100%;
    background: #cbcbcb;
    border: 1px solid #000;
    outline: 1px solid #444;
}
.artboard svg {
    display: block;
}
.art-title {
    font-size: 38px;
}
.art-label {
    font-size: 16px;
}
.triangle {
    fill: none;
    stroke: #111;
    stroke-width: 1.3;
}
.pointer {
    fill: none;
    stroke: #3c3cdf;
    stroke-width: 1.3;
    stroke-dasharray: 11 7;
}
.dots {
    fill: #1c1cf0;
}
.bounds {
    fill: none;
    stroke: #5050c8;
}
.handles {
    fill: #fff;
    stroke: #4f4fd0;
}
.scroll {
    display: flex;
    align-items: center;
    justify-content: space-between;
    background: #383838;
}
.scroll button {
    display: flex;
}
.scroll .thumb {
    width: 15px;
    height: 15px;
    background: #909090;
}
.vertical {
    flex: none;
    width: 17px;
    flex-direction: column;
    padding: 6px 0;
    border-left: 1px solid #2c2c2c;
}
.statusbar {
    flex: none;
    height: 17px;
    display: flex;
    align-items: stretch;
    padding-left: 7px;
    border-top: 1px solid #2c2c2c;
    background: #484848;
}
.statusbar .combo {
    height: 16px;
}
.statusbar .short {
    width: 41px;
}
.statusbar .drop {
    width: 15px;
}
.sync {
    display: flex;
    align-items: center;
    margin-right: 7px;
}
.pager {
    width: 43px;
    display: flex;
    align-items: center;
    justify-content: center;
    gap: 12px;
}
.pager button {
    display: flex;
}
.current-tool {
    width: 200px;
    border: 1px solid #3a3a3a;
    border-width: 0 1px;
    text-align: center;
}
.status-more {
    width: 18px;
    display: flex;
    align-items: center;
    justify-content: center;
}
.horizontal {
    flex: 1;
    padding: 0 5px;
    border-left: 1px solid #2c2c2c;
}
.corner {
    width: 17px;
    background: #505050;
}

/* dock */
.dock {
    flex: none;
    width: 243px;
    display: flex;
    flex-direction: column;
    border-left: 2px solid #242424;
    border-right: 1px solid #242424;
}
.panel {
    border-bottom: 3px solid #2a2a2a;
    background: #484848;
}
.panel.last {
    flex: 1;
    border-bottom: 0;
}
.tabs {
    height: 18px;
    display: flex;
    background: #343434;
}
.tabs button {
    display: flex;
    align-items: center;
    gap: 2px;
    padding: 0 8px;
    border-right: 1px solid #242424;
    border-bottom: 1px solid #2a2a2a;
    color: #a4a4a4;
    font-weight: 700;
}
.tabs .on {
    padding: 0 7px 0 6px;
    background: #484848;
    border-bottom-color: #484848;
    color: #e4e4e4;
}
.tabs .flyout {
    flex: 1;
    justify-content: flex-end;
    padding: 0 3px;
    border-right: 0;
}
.color-body {
    position: relative;
    padding: 7px 17px 5px 6px;
}
.color-row {
    display: flex;
    align-items: center;
    height: 18px;
    margin-bottom: 8px;
}
.color-row label {
    margin: 0 4px 0 auto;
    font-weight: 700;
}
.color-row input {
    width: 54px;
    height: 18px;
    padding: 0 4px;
    border: 1px solid #222;
    background: #a0a0a0;
    color: #111;
}
.mini {
    width: 13px;
    height: 13px;
    border: 1px solid #222;
}
.mini.none,
.swatch.none,
.look-chip {
    background: linear-gradient(135deg, #fff 44%, #b3203c 44% 56%, #fff 56%);
}
.mini.black {
    background: #000;
}
.mini.white {
    background: #fff;
}
.spectrum {
    height: 71px;
    border: 1px solid #222;
    background:
        linear-gradient(#fff, rgba(255, 255, 255, 0) 45%, rgba(0, 0, 0, 0) 50%, #000 95%),
        linear-gradient(90deg, #e8202a, #ffff20 18%, #20ff30 34%, #20ffff 51%, #2020ff 68%, #f020ff 84%, #e8202a);
}
.resize {
    position: absolute;
    right: 1px;
    bottom: 1px;
    width: 10px;
    height: 10px;
    background: radial-gradient(#111 30%, transparent 40%) 0 0 / 3px 3px;
    clip-path: polygon(100% 0, 100% 100%, 0 100%);
}
.swatch-body {
    padding: 7px 6px 0;
}
.list-box {
    display: flex;
    border: 1px solid #2a2a2a;
}
.swatch-body .list-box {
    margin-top: 7px;
}
.swatches {
    flex: 1;
    display: grid;
    grid-template-columns: repeat(15, 13px);
    grid-auto-rows: 13px;
    gap: 1px;
    height: 55px;
}
.swatch.none {
    border: 1px solid #000;
}
.swatch.registration {
    display: flex;
    background: #fff;
}
.mini-scroll {
    width: 12px;
    display: flex;
    flex-direction: column;
    align-items: center;
    justify-content: space-between;
    padding: 4px 0;
    background: #343434;
    border-left: 1px solid #2a2a2a;
}
.bar {
    width: 11px;
    background: #8c8c8c;
}
.bar.low {
    height: 15px;
    margin-bottom: 10px;
}
.bar.tall {
    height: 43px;
    margin-bottom: 14px;
}
.panel-foot {
    position: relative;
    height: 20px;
    display: flex;
    align-items: center;
    gap: 14px;
    padding: 0 27px 0 10px;
}
.fill {
    flex: 1;
}
.stroke-body {
    display: flex;
    align-items: center;
    gap: 5px;
    padding: 7px 5px 6px;
}
.weight-panel {
    width: 60px;
}
.stroke-body .drop {
    width: 15px;
}
.appearance-body {
    padding: 6px 6px 0 5px;
}
.looks {
    flex: 1;
    height: 83px;
    overflow: hidden;
}
.look {
    display: flex;
    align-items: center;
    height: 25px;
    border-bottom: 1px solid #2e2e2e;
}
.look.title b {
    margin-left: 25px;
}
.look-thumb {
    height: 20px;
    margin-left: 2px;
    border: 1px solid #222;
    background: #fff;
}
.look .eye {
    margin: 0 5px;
}
.look .caret {
    margin: 0 9px 0 8px;
}
.look > span:not(.look-chip) {
    width: 33px;
}
.look.title .look-thumb {
    width: 20px;
}
.look .hot {
    width: 33px;
    white-space: nowrap;
}
.look-chip {
    width: 16px;
    height: 16px;
    margin-left: 10px;
    border: 1px solid #111;
    outline: 1px solid #eee;
    outline-offset: -3px;
}
.look-foot {
    height: 18px;
}
.fx {
    display: flex;
    align-items: center;
    gap: 1px;
    font-family: "Liberation Serif", serif;
    font-style: italic;
    font-weight: 700;
    font-size: 14px;
}
.layers {
    margin: 6px 5px 0;
    padding: 0;
    list-style: none;
    border: 1px solid #2a2a2a;
    border-bottom: 0;
}
.layers li {
    position: relative;
    display: flex;
    align-items: center;
    height: 21px;
    border-bottom: 1px solid #2e2e2e;
}
.layers .selected {
    background: #55617c;
}
.cell {
    width: 21px;
    height: 20px;
    display: flex;
    align-items: center;
    justify-content: center;
    border-right: 1px solid #333;
}
.bar-color {
    width: 3px;
    height: 18px;
    margin: 0 7px 0 1px;
}
.yellow {
    background: #f4f04c;
}
.red {
    background: #e83c50;
}
.blue {
    background: #4c4cff;
}
.sky {
    background: #4080f8;
}
.bar-color.green {
    background: #22f050;
}
.thumbnail {
    width: 18px;
    height: 18px;
    margin: 0 5px 0 10px;
    border: 1px solid #000;
    background: #fff;
}
.layers .name {
    flex: 1;
}
.target {
    width: 9px;
    height: 9px;
    margin-right: 20px;
    border: 1px solid #bbb;
    border-radius: 50%;
}
.picked {
    position: absolute;
    right: 8px;
    width: 6px;
    height: 6px;
    border: 1px solid #111;
    background: #4c4cff;
}
.layer-foot {
    padding-left: 5px;
}
.desktop-edge {
    flex: none;
    height: 4px;
    background: linear-gradient(90deg, #777, #484848 20%, #484848 28%, #999 28%);
}
.watermark {
    position: absolute;
    right: 2px;
    bottom: 0;
    font-family: "Liberation Sans", sans-serif;
    font-size: 28px;
    line-height: 28px;
    color: rgba(28, 28, 28, 0.6);
    text-shadow: 0 0 1px #222;
    pointer-events: none;
}
```
